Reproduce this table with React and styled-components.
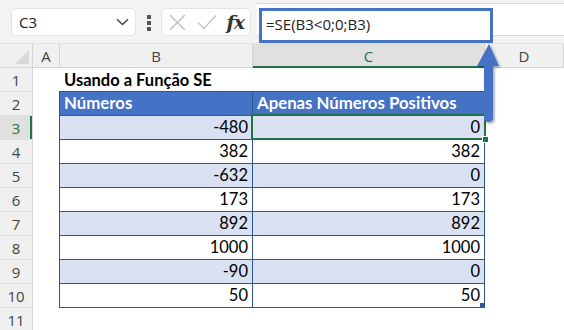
import React from 'react';
import styled, { createGlobalStyle } from 'styled-components';

const GREEN = '#217346';
const BLUE = '#4472c4';
const DARK_BLUE = '#2f5597';
const COLS = '33px 27px 193px 232px 1fr';

const GlobalStyle = createGlobalStyle`
  html, body {
    margin: 0;
    padding: 0;
    background: #fff;
  }
  body {
    width: 564px;
    height: 330px;
    overflow: hidden;
    font-family: "Open Sans", "Noto Sans", sans-serif;
  }
`;

const Frame = styled.div`
  position: relative;
  width: 564px;
  height: 330px;
  overflow: hidden;
  background: #fff;
`;

const FormulaBar = styled.div`
  display: flex;
  align-items: flex-start;
  height: 44px;
  box-sizing: border-box;
  background: #f3f3f3;
  border-bottom: 1px solid #e2e2e2;
`;

const NameBox = styled.div`
  margin: 8px 0 0 11px;
  width: 125px;
  height: 28px;
  box-sizing: border-box;
  display: flex;
  align-items: center;
  justify-content: space-between;
  padding: 0 6px 0 7px;
  background: #fff;
  border: 1px solid #e4e4e4;
  border-radius: 5px;
  font-size: 15px;
  color: #222;
`;

const Dots = styled.div`
  margin: 15px 0 0 11px;
  width: 4px;
  display: flex;
  flex-direction: column;
  gap: 2px;
  span {
    width: 4px;
    height: 4px;
    background: #555;
  }
`;

const FxBox = styled.div`
  margin: 8px 0 0 10px;
  width: 90px;
  height: 28px;
  box-sizing: border-box;
  display: flex;
  align-items: center;
  gap: 11px;
  padding: 0 6px 0 7px;
  background: #fff;
  border: 1px solid #e4e4e4;
  border-radius: 5px;
`;

const Fx = styled.span`
  margin-left: -1px;
  font-family: "DejaVu Serif", "Liberation Serif", serif;
  font-style: italic;
  font-weight: 700;
  font-size: 19px;
  letter-spacing: -1px;
  color: #333;
  line-height: 1;
`;

const FormulaInput = styled.div`
  position: relative;
  flex: 1;
  margin: 3px 0 0 6px;
  height: 33px;
  box-sizing: border-box;
  background: #fff;
  border-top: 1px solid #d6d6d6;
  border-bottom: 1px solid #d6d6d6;
`;

const Highlight = styled.div`
  position: absolute;
  z-index: 3;
  left: 2px;
  top: 4px;
  width: 234px;
  height: 35px;
  box-sizing: border-box;
  border: 3px solid ${BLUE};
  background: #fff;
  padding: 3px 0 0 4px;
  font-size: 15px;
  color: #222;
`;

const Sheet = styled.div`
  display: flex;
  flex-direction: column;
`;

const HeaderRow = styled.div`
  display: grid;
  grid-template-columns: ${COLS};
  height: 24px;
  box-sizing: border-box;
  background: #f0f0f0;
  border-bottom: 1px solid #d3d3d3;
`;

const Corner = styled.div`
  position: relative;
  border-right: 1px solid #d3d3d3;
  &::after {
    content: '';
    position: absolute;
    right: 3px;
    bottom: 3px;
    border-style: solid;
    border-width: 0 0 14px 14px;
    border-color: transparent transparent #dadada transparent;
  }
`;

const ColHead = styled.div`
  display: flex;
  align-items: center;
  justify-content: center;
  box-sizing: border-box;
  font-size: 15px;
  color: ${(p) => (p.$active ? GREEN : '#444')};
  background: ${(p) => (p.$active ? '#e0e0e0' : 'transparent')};
  border-right: 1px solid #d3d3d3;
  box-shadow: ${(p) => (p.$active ? `inset 0 -2px 0 ${GREEN}` : 'none')};
  margin-bottom: ${(p) => (p.$active ? '-1px' : '0')};
`;

const Row = styled.div`
  display: grid;
  grid-template-columns: ${COLS};
  height: 24px;
`;

const RowNum = styled.div`
  display: flex;
  align-items: center;
  justify-content: center;
  box-sizing: border-box;
  font-size: 15px;
  color: ${(p) => (p.$active ? GREEN : '#444')};
  background: ${(p) => (p.$active ? '#e0e0e0' : '#f0f0f0')};
  border-bottom: 1px solid #dcdcdc;
  border-right: 1px solid #d3d3d3;
  box-shadow: ${(p) => (p.$active ? `inset -2px 0 0 ${GREEN}` : 'none')};
`;

const Blank = styled.div``;

const Title = styled.div`
  grid-column: 3 / 5;
  display: flex;
  align-items: flex-end;
  padding: 0 0 2px 4px;
  font-family: Lato, "Open Sans", sans-serif;
  font-weight: 700;
  font-size: 16.5px;
  color: #000;
`;

const bg = { head: BLUE, odd: '#d9e1f2', even: '#fff' };

const Cell = styled.div`
  position: relative;
  display: flex;
  align-items: flex-end;
  justify-content: ${(p) => (p.$variant === 'head' ? 'flex-start' : 'flex-end')};
  box-sizing: border-box;
  padding: 0 4px 2px 4px;
  margin-left: ${(p) => (p.$first ? '-1px' : '0')};
  background: ${(p) => bg[p.$variant]};
  color: ${(p) => (p.$variant === 'head' ? '#fff' : '#000')};
  font-family: Lato, "Open Sans", sans-serif;
  font-weight: ${(p) => (p.$variant === 'head' ? 700 : 400)};
  font-size: ${(p) => (p.$variant === 'head' ? '16.8px' : '16.5px')};
  white-space: nowrap;
  border-bottom: 1px solid ${DARK_BLUE};
  border-top: ${(p) => (p.$variant === 'head' ? `1px solid ${DARK_BLUE}` : 'none')};
  border-left: ${(p) => (p.$first ? `1px solid ${DARK_BLUE}` : 'none')};
  border-right: 1px solid ${DARK_BLUE};
  margin-top: ${(p) => (p.$variant === 'head' ? '-1px' : '0')};

  ${(p) =>
    p.$selected &&
    `
    &::before {
      content: '';
      position: absolute;
      left: -2px;
      top: -2px;
      right: -2px;
      bottom: -1px;
      border: 2px solid ${GREEN};
    }
    &::after {
      content: '';
      position: absolute;
      right: -5px;
      bottom: -4px;
      width: 5px;
      height: 5px;
      background: ${GREEN};
      border: 1px solid #fff;
      z-index: 2;
    }
  `}

  ${(p) =>
    p.$tableEnd &&
    `
    &::after {
      content: '';
      position: absolute;
      right: -1px;
      bottom: -1px;
      width: 5px;
      height: 5px;
      background: ${DARK_BLUE};
    }
  `}
`;

const Arrow = styled.svg`
  position: absolute;
  z-index: 4;
  left: 474px;
  top: 42px;
  overflow: visible;
`;

const rows = [
  [-480, 0],
  [382, 382],
  [-632, 0],
  [173, 173],
  [892, 892],
  [1000, 1000],
  [-90, 0],
  [50, 50],
];

function Chevron() {
  return (
    <svg width="13" height="8" viewBox="0 0 13 8">
      <path d="M1 1.2 L6.5 6.5 L12 1.2" fill="none" stroke="#444" strokeWidth="1.4" />
    </svg>
  );
}

function Cross() {
  return (
    <svg width="17" height="17" viewBox="0 0 17 17">
      <path d="M1 1 L16 16 M16 1 L1 16" stroke="#c6c6c6" strokeWidth="1.5" fill="none" />
    </svg>
  );
}

function Check() {
  return (
    <svg width="20" height="16" viewBox="0 0 20 16">
      <path d="M1 8.5 L7 14.5 L19 1.5" stroke="#c6c6c6" strokeWidth="1.5" fill="none" />
    </svg>
  );
}

export default function App() {
  return (
    <Frame>
      <GlobalStyle />
      <FormulaBar>
        <NameBox>
          <span>C3</span>
          <Chevron />
        </NameBox>
        <Dots>
          <span />
          <span />
          <span />
        </Dots>
        <FxBox>
          <Cross />
          <Check />
          <Fx>fx</Fx>
        </FxBox>
        <FormulaInput>
          <Highlight>=SE(B3&lt;0;0;B3)</Highlight>
        </FormulaInput>
      </FormulaBar>

      <Sheet>
        <HeaderRow>
          <Corner />
          <ColHead>A</ColHead>
          <ColHead>B</ColHead>
          <ColHead $active>C</ColHead>
          <ColHead>D</ColHead>
        </HeaderRow>

        <Row>
          <RowNum>1</RowNum>
          <Blank />
          <Title>Usando a Função SE</Title>
          <Blank />
        </Row>

        <Row>
          <RowNum>2</RowNum>
          <Blank />
          <Cell $variant="head" $first>Números</Cell>
          <Cell $variant="head">Apenas Números Positivos</Cell>
          <Blank />
        </Row>

        {rows.map(([b, c], i) => {
          const variant = i % 2 === 0 ? 'odd' : 'even';
          return (
            <Row key={i}>
              <RowNum $active={i === 0}>{i + 3}</RowNum>
              <Blank />
              <Cell $variant={variant} $first>{b}</Cell>
              <Cell $variant={variant} $selected={i === 0} $tableEnd={i === rows.length - 1}>
                {c}
              </Cell>
              <Blank />
            </Row>
          );
        })}

        <Row>
          <RowNum>11</RowNum>
        </Row>
      </Sheet>

      <Arrow width="26" height="82" viewBox="0 0 26 82">
        <defs>
          <filter id="shadow" x="-50%" y="-20%" width="200%" height="140%">
            <feDropShadow dx="1.5" dy="1.5" stdDeviation="1.2" floodColor="#000" floodOpacity="0.35" />
          </filter>
        </defs>
        <g filter="url(#shadow)">
          <path
            d="M15 2 L25 24 L19 24 L19 76 Q19 80 14.5 80 Q10 80 10 76 L10 24 L3 24 Z"
            fill={BLUE}
          />
        </g>
      </Arrow>
    </Frame>
  );
}
